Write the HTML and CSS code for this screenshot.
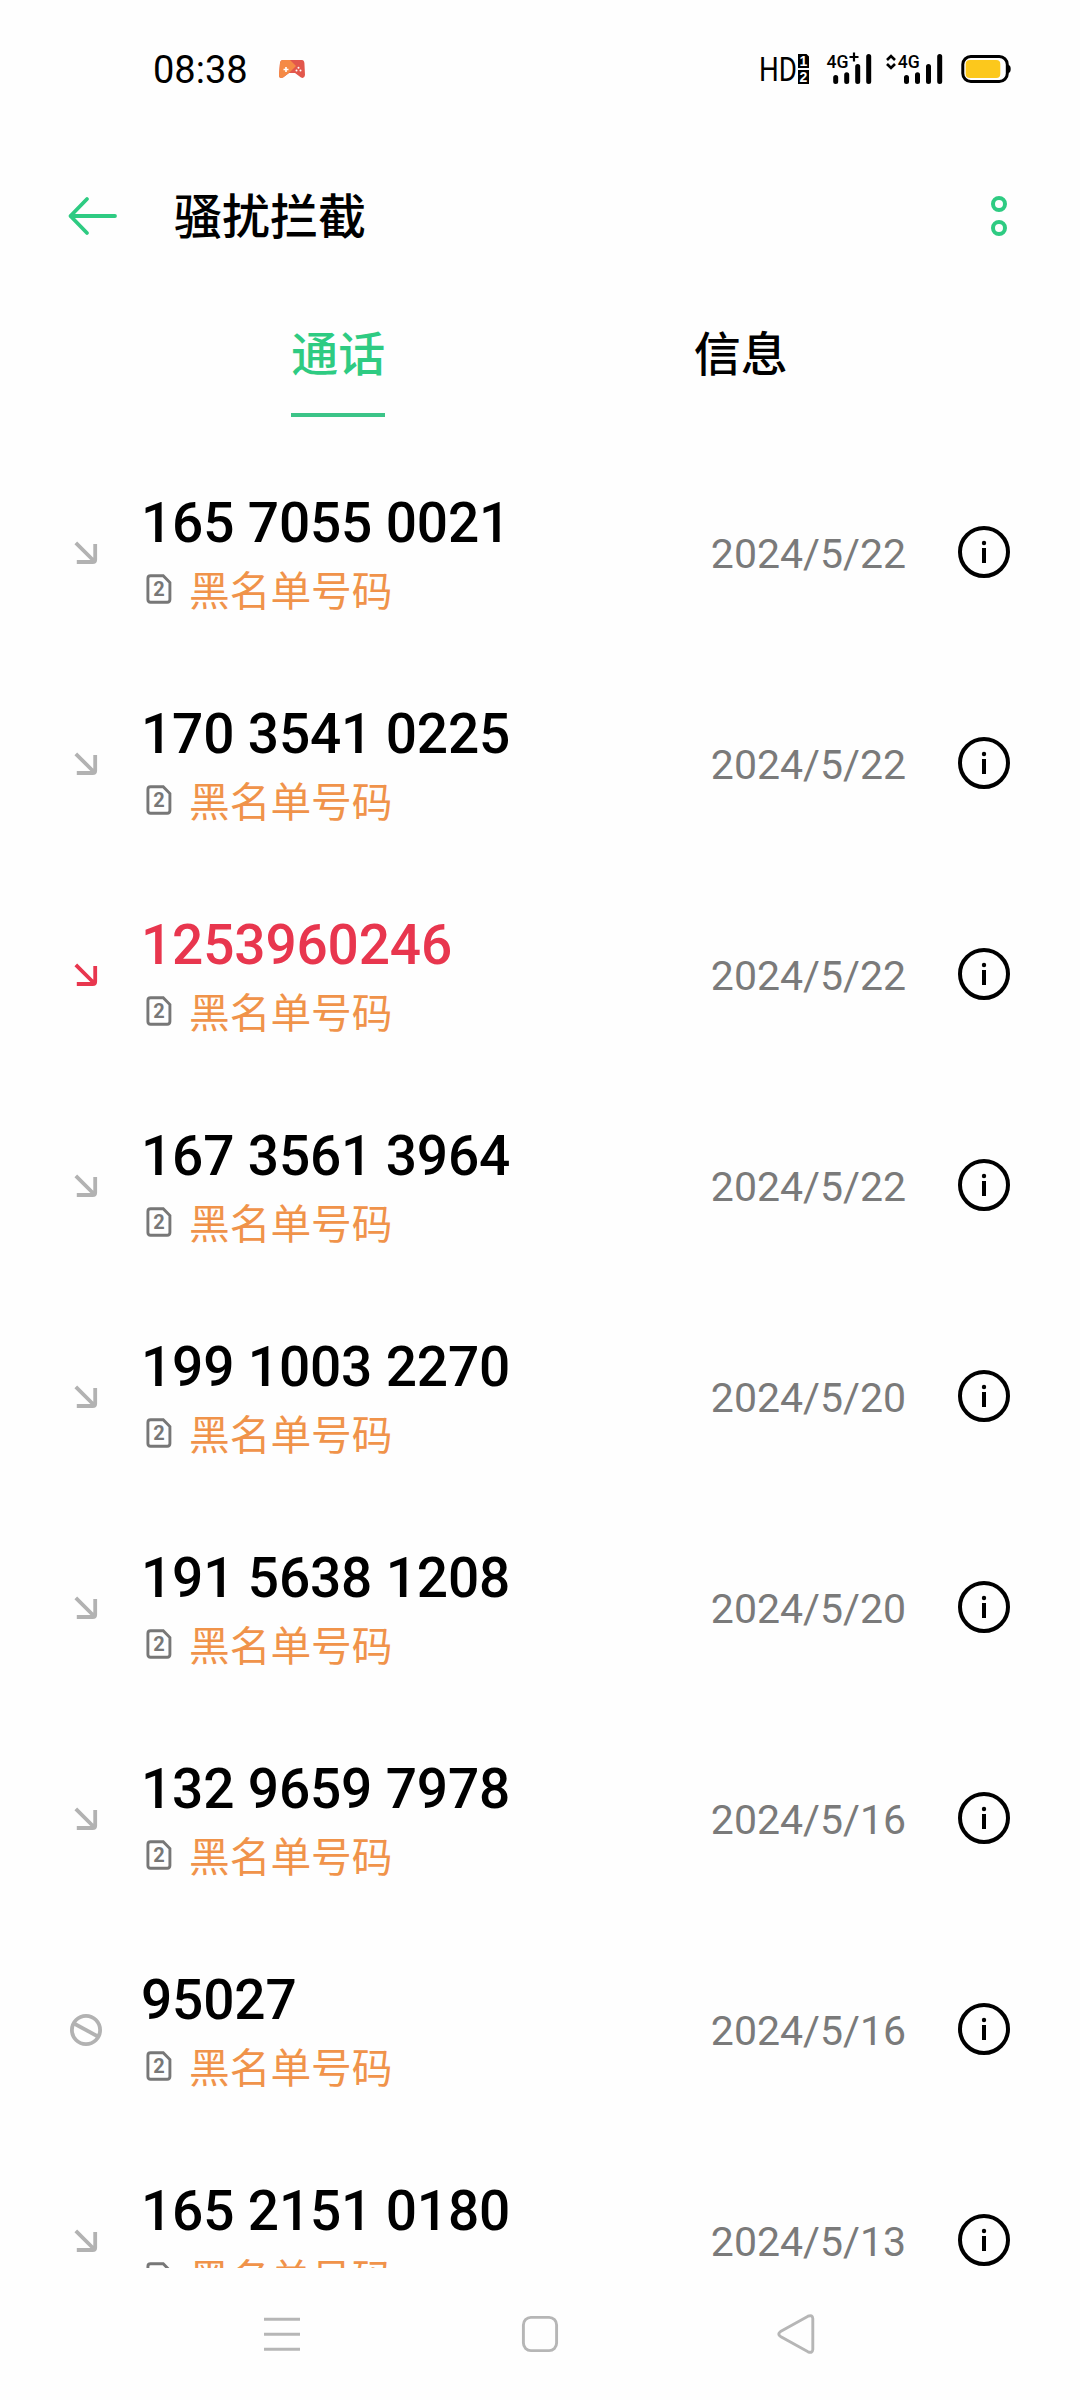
FILE: index.html
```html
<!DOCTYPE html>
<html lang="zh-CN">
<head>
<meta charset="utf-8">
<title>骚扰拦截</title>
<link rel="stylesheet" href="styles.css">
</head>
<body>
<svg class="defs" aria-hidden="true">
  <symbol id="arrow" viewBox="0 0 36 36"><path d="M7.8 8.8 26 27M8.8 28H24.6Q27.2 28 27.2 25.4V10" fill="none" stroke="currentColor" stroke-width="3.8"/></symbol>
  <symbol id="ban" viewBox="0 0 36 36"><g fill="none" stroke="currentColor" stroke-width="3.8"><circle cx="18" cy="19" r="14.1"/><path d="M6 12.5 30 25.5"/></g></symbol>
  <symbol id="sim" viewBox="0 0 26 30"><path d="M4.6 1.7H17.2L23.9 8.6V25.6Q23.9 28.3 21.2 28.3H4.6Q1.9 28.3 1.9 25.6V4.4Q1.9 1.7 4.6 1.7Z" fill="none" stroke="#777" stroke-width="2.9"/><text x="13" y="21.5" text-anchor="middle" class="sim-digit">2</text></symbol>
  <symbol id="info" viewBox="0 0 52 52"><circle cx="26" cy="26" r="24" fill="none" stroke="#000" stroke-width="4"/><circle cx="26" cy="17" r="2.2"/><path d="M24 22h4v15h-4z"/></symbol>
</svg>
<div class="screen">
  <div class="status">
    <span class="clock">08:38</span>
    <svg class="game" viewBox="0 0 28 20"><path d="M5 1H24Q26 1 26.4 4L27 16Q26.500 20 23 18.500L17 14H11L5 18.500Q1 20 1 16L2 4Q2.500 1 5 1Z" fill="#e2574c"/><path d="M5 1H12L18 7 11 14 5 18.500Q1 20 1 16L2 4Q2.500 1 5 1Z" fill="#f58a45"/><path d="M5.500 10.500h5M8 8v5" stroke="#fff" stroke-width="1.600"/><g fill="#fff"><circle cx="20.500" cy="8.700" r="1"/><circle cx="18.500" cy="11.500" r="1"/><circle cx="22.500" cy="11.500" r="1"/></g></svg>
    <svg class="signals" viewBox="-4 0 260 40">
      <text x="-2" y="32" class="hd" textLength="38" lengthAdjust="spacingAndGlyphs">HD</text>
      <path d="M37 5h8.500l2.500 2.500V19H37zM37 21h11v14H37z"/>
      <text x="42.500" y="17" class="slot" text-anchor="middle">1</text>
      <text x="42.500" y="32.700" class="slot" text-anchor="middle">2</text>
      <text x="65.500" y="18.700" class="net" textLength="22" lengthAdjust="spacingAndGlyphs">4G</text>
      <g fill="none" stroke="#000" stroke-width="2.200"><path d="M88.500 8h9M93 3.500v9"/></g>
      <g fill="none" stroke="#000" stroke-width="5" stroke-linecap="round"><path d="M74.700 28.500V32.500M85.700 25.800V32.500M96.700 17.500V32.500M107.700 7.500V32.500M145.500 28.500V32.500M156.500 25.800V32.500M167.500 17.500V32.500M178.700 7.500V32.500"/></g>
      <path d="M126 11 130 7 134 11M126 15 130 19 134 15" fill="none" stroke="#000" stroke-width="2.600"/>
      <text x="136.700" y="18.700" class="net" textLength="22" lengthAdjust="spacingAndGlyphs">4G</text>
      <rect x="201.800" y="7.500" width="44.500" height="25" rx="8" fill="none" stroke="#000" stroke-width="3"/>
      <path d="M247 16Q249.700 16 249.700 20T247 24z"/>
      <rect x="204.700" y="11" width="34.600" height="18" rx="4" fill="#fcc81c"/>
    </svg>
  </div>
  <header class="header">
    <svg class="back" viewBox="0 0 52 40"><path d="M20 3 3.500 20 20 37M3.500 20H48" fill="none" stroke="#2ecb82" stroke-width="3.800" stroke-linecap="round" stroke-linejoin="round"/></svg>
    <h1 class="title">骚扰拦截</h1>
    <svg class="more" viewBox="0 0 16 40"><g fill="none" stroke="#2ecb82" stroke-width="4"><circle cx="8" cy="8" r="6"/><circle cx="8" cy="32" r="6"/></g></svg>
  </header>
  <nav class="tabs">
    <div class="tab tab-active"><span class="tab-label">通话</span></div>
    <div class="tab"><span class="tab-label">信息</span></div>
  </nav>
  <main class="list">
    <div class="row"><svg class="kind"><use href="#arrow"/></svg><div class="body"><div class="number">165 7055 0021</div><div class="tag"><svg class="sim"><use href="#sim"/></svg><span class="tag-text">黑名单号码</span></div></div><span class="date">2024/5/22</span><svg class="info"><use href="#info"/></svg></div>
    <div class="row"><svg class="kind"><use href="#arrow"/></svg><div class="body"><div class="number">170 3541 0225</div><div class="tag"><svg class="sim"><use href="#sim"/></svg><span class="tag-text">黑名单号码</span></div></div><span class="date">2024/5/22</span><svg class="info"><use href="#info"/></svg></div>
    <div class="row row-missed"><svg class="kind"><use href="#arrow"/></svg><div class="body"><div class="number">1253960246</div><div class="tag"><svg class="sim"><use href="#sim"/></svg><span class="tag-text">黑名单号码</span></div></div><span class="date">2024/5/22</span><svg class="info"><use href="#info"/></svg></div>
    <div class="row"><svg class="kind"><use href="#arrow"/></svg><div class="body"><div class="number">167 3561 3964</div><div class="tag"><svg class="sim"><use href="#sim"/></svg><span class="tag-text">黑名单号码</span></div></div><span class="date">2024/5/22</span><svg class="info"><use href="#info"/></svg></div>
    <div class="row"><svg class="kind"><use href="#arrow"/></svg><div class="body"><div class="number">199 1003 2270</div><div class="tag"><svg class="sim"><use href="#sim"/></svg><span class="tag-text">黑名单号码</span></div></div><span class="date">2024/5/20</span><svg class="info"><use href="#info"/></svg></div>
    <div class="row"><svg class="kind"><use href="#arrow"/></svg><div class="body"><div class="number">191 5638 1208</div><div class="tag"><svg class="sim"><use href="#sim"/></svg><span class="tag-text">黑名单号码</span></div></div><span class="date">2024/5/20</span><svg class="info"><use href="#info"/></svg></div>
    <div class="row"><svg class="kind"><use href="#arrow"/></svg><div class="body"><div class="number">132 9659 7978</div><div class="tag"><svg class="sim"><use href="#sim"/></svg><span class="tag-text">黑名单号码</span></div></div><span class="date">2024/5/16</span><svg class="info"><use href="#info"/></svg></div>
    <div class="row"><svg class="kind"><use href="#ban"/></svg><div class="body"><div class="number">95027</div><div class="tag"><svg class="sim"><use href="#sim"/></svg><span class="tag-text">黑名单号码</span></div></div><span class="date">2024/5/16</span><svg class="info"><use href="#info"/></svg></div>
    <div class="row"><svg class="kind"><use href="#arrow"/></svg><div class="body"><div class="number">165 2151 0180</div><div class="tag"><svg class="sim"><use href="#sim"/></svg><span class="tag-text">黑名单号码</span></div></div><span class="date">2024/5/13</span><svg class="info"><use href="#info"/></svg></div>
  </main>
  <footer class="navbar">
    <svg class="nav-icon" viewBox="0 0 44 44"><path d="M4 7.300H40M4 22.300H40M4 37.300H40"/></svg>
    <svg class="nav-icon" viewBox="0 0 44 44"><rect x="5.400" y="5.400" width="33.200" height="33.200" rx="7.500"/></svg>
    <svg class="nav-icon" viewBox="0 0 44 44"><path d="M4.500 19.600 32 4.200Q36.500 2.500 36.800 6.500V37.500Q36.500 41.500 32 39.800L4.500 24.400Q1 22 4.500 19.600Z"/></svg>
  </footer>
</div>
</body>
</html>
```
FILE: styles.css
```css
* { box-sizing: border-box; }
body {
  margin: 0;
  background: #fefefe;
  color: #000;
  font-family: Roboto, "Noto Sans CJK SC", sans-serif;
}
svg { display: block; flex: none; }
.defs { display: none; }
.screen {
  display: flex;
  flex-direction: column;
  width: 1080px;
  height: 2400px;
  overflow: hidden;
}
.status {
  display: flex;
  align-items: center;
  height: 138px;
  padding: 0 63px 0 153px;
}
.clock {
  width: 125px;
  padding-top: 1px;
  font: 400 38px/40px Roboto, sans-serif;
}
.game { width: 28px; height: 20px; }
.signals { width: 260px; height: 40px; margin-left: auto; }
.hd { font: 33px Roboto, sans-serif; }
.slot { font: bold 14px "Liberation Sans", sans-serif; fill: #fff; }
.net { font: 500 18.5px Roboto, sans-serif; }
.header {
  display: flex;
  align-items: center;
  height: 154px;
  padding: 2px 73px 0 67px;
}
.back { width: 52px; height: 40px; }
.title {
  margin: 0 auto 0 55px;
  padding-top: 4px;
  font-size: 48px;
  line-height: 64px;
  font-weight: 500;
}
.more { width: 16px; height: 40px; }
.tabs {
  display: flex;
  height: 154px;
  padding: 0 138px 0 137px;
}
.tab {
  display: flex;
  flex: 1;
  justify-content: center;
  align-items: flex-start;
}
.tab-label {
  height: 125px;
  padding-top: 31px;
  font-size: 47px;
  line-height: 64px;
  font-weight: 500;
  border-bottom: 4px solid transparent;
}
.tab-active .tab-label { color: #2ecb82; border-color: #3cc488; }
.list { height: 1822px; overflow: hidden; }
.row {
  display: flex;
  align-items: center;
  height: 211px;
  padding: 1px 70px 0 68px;
}
.kind { width: 36px; height: 36px; color: #b2b2b2; }
.body { margin-left: 37px; padding-top: 1px; }
.number {
  font-size: 55px;
  line-height: 64px;
  font-weight: 500;
  letter-spacing: -0.16px;
  white-space: nowrap;
}
.row-missed .number, .row-missed .kind { color: #e8364e; }
.tag {
  display: flex;
  align-items: flex-start;
  gap: 17px;
  height: 48px;
  margin: 11px 0 0 5px;
}
.sim { width: 26px; height: 30px; margin-top: 8px; }
.sim-digit { font: bold 20px Roboto, sans-serif; fill: #777; }
.tag-text {
  padding-top: 2px;
  font-size: 40.7px;
  line-height: 48px;
  color: #f0934a;
}
.date {
  margin-left: auto;
  padding-top: 3px;
  font-size: 41px;
  line-height: 48px;
  color: #7a7a7a;
}
.info { width: 52px; height: 52px; margin-left: 52px; }
.navbar {
  display: flex;
  justify-content: space-between;
  align-items: center;
  height: 132px;
  padding: 0 260px;
}
.nav-icon {
  width: 44px;
  height: 44px;
  fill: none;
  stroke: #b6b6b6;
  stroke-width: 2.900;
}
```
